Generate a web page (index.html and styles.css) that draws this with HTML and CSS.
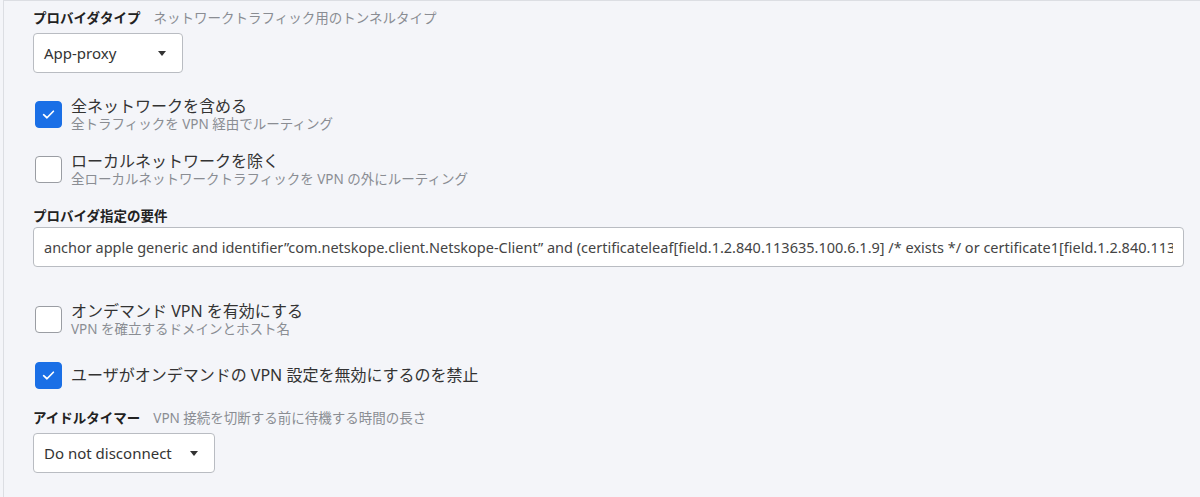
FILE: index.html
```html
<!DOCTYPE html>
<html lang="ja">
<head>
  <meta charset="UTF-8">
  <title>VPN 設定</title>
  <link rel="stylesheet" href="styles.css">
</head>
<body>
  <div class="panel">
    <div class="field">
      <div class="label"><b>プロバイダタイプ</b><span class="hint">ネットワークトラフィック用のトンネルタイプ</span></div>
      <div class="select sel-type">App-proxy<span class="caret"></span></div>
    </div>

    <div class="check first">
      <span class="box on"><svg viewBox="0 0 12 10" width="13" height="11"><path d="M1.5 5.2 L4.6 8 L10.5 2" fill="none" stroke="#fff" stroke-width="1.6" stroke-linecap="round" stroke-linejoin="round"/></svg></span>
      <div class="text">
        <div class="title">全ネットワークを含める</div>
        <div class="sub">全トラフィックを VPN 経由でルーティング</div>
      </div>
    </div>

    <div class="check">
      <span class="box"></span>
      <div class="text">
        <div class="title">ローカルネットワークを除く</div>
        <div class="sub">全ローカルネットワークトラフィックを VPN の外にルーティング</div>
      </div>
    </div>

    <div class="field req">
      <div class="label"><b>プロバイダ指定の要件</b></div>
      <div class="input"><span class="value">anchor apple generic and identifier”com.netskope.client.Netskope-Client” and (certificateleaf[field.1.2.840.113635.100.6.1.9] /* exists */ or certificate1[field.1.2.840.113635</span></div>
    </div>

    <div class="check ondemand">
      <span class="box"></span>
      <div class="text">
        <div class="title">オンデマンド VPN を有効にする</div>
        <div class="sub">VPN を確立するドメインとホスト名</div>
      </div>
    </div>

    <div class="check single">
      <span class="box on"><svg viewBox="0 0 12 10" width="13" height="11"><path d="M1.5 5.2 L4.6 8 L10.5 2" fill="none" stroke="#fff" stroke-width="1.6" stroke-linecap="round" stroke-linejoin="round"/></svg></span>
      <div class="text">
        <div class="title">ユーザがオンデマンドの VPN 設定を無効にするのを禁止</div>
      </div>
    </div>

    <div class="field idle">
      <div class="label"><b>アイドルタイマー</b><span class="hint">VPN 接続を切断する前に待機する時間の長さ</span></div>
      <div class="select sel-idle">Do not disconnect<span class="caret"></span></div>
    </div>
  </div>
</body>
</html>
```

FILE: styles.css
```css
body {
  margin: 0;
  background: #f4f5f9;
  font-family: "Noto Sans", "Noto Sans CJK JP", sans-serif;
  color: #333;
}
.panel {
  height: 497px;
  box-sizing: border-box;
  border-top: 1px solid #dcdee3;
  border-left: 1px solid #dcdee3;
  margin-left: 3px;
  padding: 8px 16px 0 29px;
}
.label {
  font-size: 13.5px;
  line-height: 18px;
  color: #222;
}
.label b {
  font-weight: 700;
}
.hint {
  color: #8a8d93;
  margin-left: 13px;
}
.select {
  margin-top: 6px;
  height: 40px;
  box-sizing: border-box;
  border: 1px solid #b9bcc2;
  border-radius: 4px;
  background: #fff;
  display: flex;
  align-items: center;
  justify-content: space-between;
  padding: 0 16px 0 10px;
  font-size: 15px;
  color: #333;
}
.sel-type { width: 150px; }
.sel-idle { width: 182px; }
.caret {
  width: 0;
  height: 0;
  border-left: 4px solid transparent;
  border-right: 4px solid transparent;
  border-top: 5px solid #333;
}
.check {
  display: flex;
  align-items: flex-start;
  margin-top: 19px;
}
.check.first { margin-top: 27px; }
.check.ondemand { margin-top: 38px; }
.check.single { align-items: center; margin-top: 20px; }
.check .text { margin: -3px 0 3px; }
.check.single .text { margin: 0; }
.box {
  width: 27px;
  height: 27px;
  box-sizing: border-box;
  border: 1px solid #9a9da3;
  border-radius: 4px;
  background: #fff;
  margin: 1px 9px 0 2px;
  display: flex;
  align-items: center;
  justify-content: center;
  flex-shrink: 0;
}
.box.on {
  background: #1a6fe6;
  border-color: #1a6fe6;
}
.title {
  font-size: 16px;
  line-height: 19px;
  color: #333;
}
.sub {
  font-size: 13.5px;
  line-height: 17px;
  color: #8a8d93;
}
.field.req { margin-top: 16px; }
.input {
  margin-top: 2px;
  height: 40px;
  box-sizing: border-box;
  border: 1px solid #b9bcc2;
  border-radius: 4px;
  background: #fff;
  padding: 0 10px;
  line-height: 38px;
  font-size: 14.5px;
  color: #444;
  white-space: nowrap;
  overflow: hidden;
}
.value {
  display: block;
  overflow: hidden;
}
.field.idle { margin-top: 20px; }
```
